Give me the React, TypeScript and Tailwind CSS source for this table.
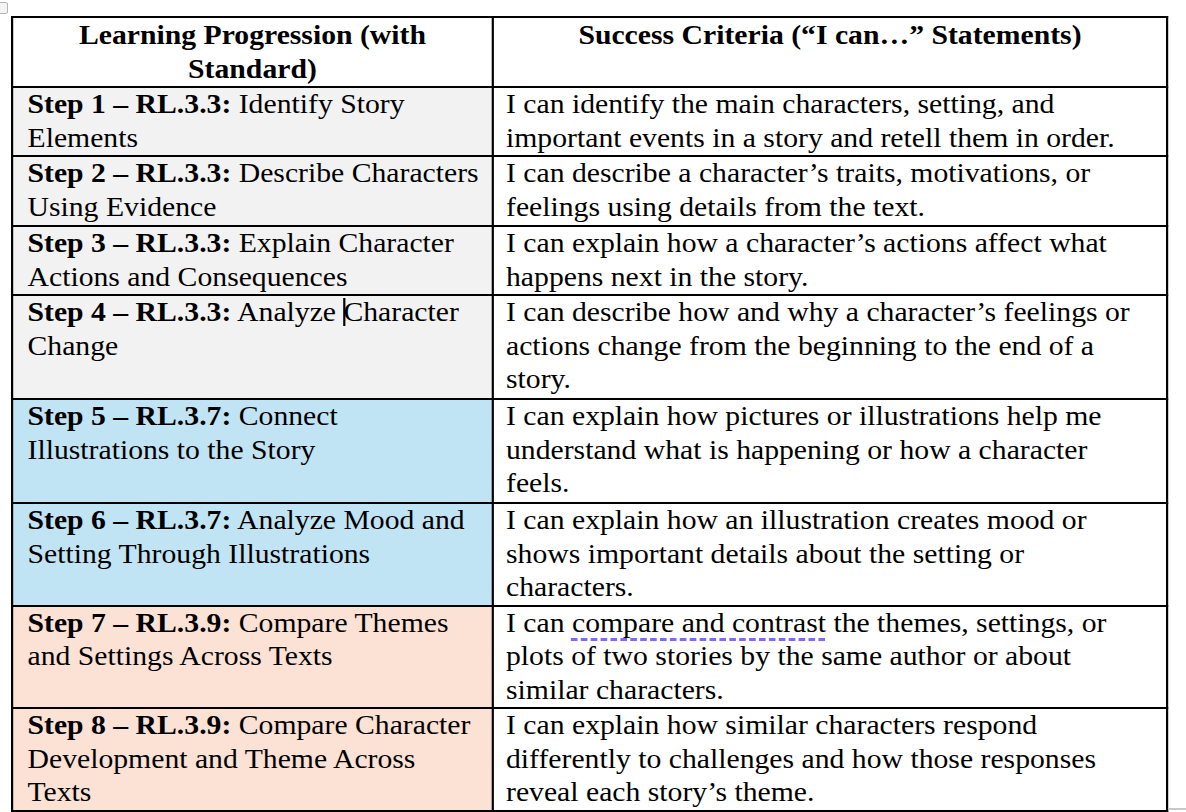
import React from 'react';

type Row = {
  step: string;
  code: string;
  title: React.ReactNode;
  criteria: React.ReactNode;
  bg: string;
  h: string;
};

const rows: Row[] = [
  {
    step: 'Step 1',
    code: 'RL.3.3:',
    title: 'Identify Story Elements',
    criteria: 'I can identify the main characters, setting, and important events in a story and retell them in order.',
    bg: 'bg-[#f2f2f2]',
    h: 'h-[69px]',
  },
  {
    step: 'Step 2',
    code: 'RL.3.3:',
    title: 'Describe Characters Using Evidence',
    criteria: 'I can describe a character’s traits, motivations, or feelings using details from the text.',
    bg: 'bg-[#f2f2f2]',
    h: 'h-[70px]',
  },
  {
    step: 'Step 3',
    code: 'RL.3.3:',
    title: 'Explain Character Actions and Consequences',
    criteria: 'I can explain how a character’s actions affect what happens next in the story.',
    bg: 'bg-[#f2f2f2]',
    h: 'h-[69px]',
  },
  {
    step: 'Step 4',
    code: 'RL.3.3:',
    title: (
      <>
        Analyze <span className="inline-block w-[2px] h-[28px] bg-black align-[-5px] -mr-[2px]" />Character Change
      </>
    ),
    criteria: 'I can describe how and why a character’s feelings or actions change from the beginning to the end of a story.',
    bg: 'bg-[#f2f2f2]',
    h: 'h-[104px]',
  },
  {
    step: 'Step 5',
    code: 'RL.3.7:',
    title: 'Connect Illustrations to the Story',
    criteria: 'I can explain how pictures or illustrations help me understand what is happening or how a character feels.',
    bg: 'bg-[#c1e4f5]',
    h: 'h-[104px]',
  },
  {
    step: 'Step 6',
    code: 'RL.3.7:',
    title: 'Analyze Mood and Setting Through Illustrations',
    criteria: 'I can explain how an illustration creates mood or shows important details about the setting or characters.',
    bg: 'bg-[#c1e4f5]',
    h: 'h-[102px]',
  },
  {
    step: 'Step 7',
    code: 'RL.3.9:',
    title: 'Compare Themes and Settings Across Texts',
    criteria: (
      <>
        I can{' '}
        <span className="underline decoration-dashed decoration-[#7b6cf2] decoration-[3px] underline-offset-[6px]">
          compare and contrast
        </span>{' '}
        the themes, settings, or plots of two stories by the same author or about similar characters.
      </>
    ),
    bg: 'bg-[#fbe2d5]',
    h: 'h-[100px]',
  },
  {
    step: 'Step 8',
    code: 'RL.3.9:',
    title: 'Compare Character Development and Theme Across Texts',
    criteria: 'I can explain how similar characters respond differently to challenges and how those responses reveal each story’s theme.',
    bg: 'bg-[#fbe2d5]',
    h: 'h-[102px]',
  },
];

export default function App() {
  return (
    <div
      className="relative w-[1186px] h-[812px] overflow-hidden bg-white pt-[16px] pl-[11px] text-black text-[27px] leading-[33.5px]"
      style={{ fontFamily: '"Liberation Serif", "Times New Roman", serif' }}
    >
      {/* table move handle */}
      <div className="absolute left-[-3px] top-[2px] w-[11px] h-[12px] border border-[#b5b5b5] bg-[#f4f4f4] rounded-[2px]" />

      {/* the screenshot is stretched sideways, so the table is widened to match */}
      <div className="w-[1050px] origin-top-left scale-x-[1.1]">
        <table className="table-fixed border-collapse border-2 border-black w-[1050px]">
          <colgroup>
            <col className="w-[437px]" />
            <col className="w-[613px]" />
          </colgroup>
          <thead>
            <tr className="h-[70px]">
              <th className="border-2 border-black align-top font-bold text-center px-[12px] pt-[1px]">
                Learning Progression (with Standard)
              </th>
              <th className="border-2 border-black align-top font-bold text-center px-[12px] pt-[1px]">
                Success Criteria (“I can…” Statements)
              </th>
            </tr>
          </thead>
          <tbody>
            {rows.map((r) => (
              <tr key={r.step} className={r.h}>
                <td className={`border-2 border-black align-top pl-[13px] pr-[8px] p-0 ${r.bg}`}>
                  <b>
                    {r.step} – {r.code}
                  </b>{' '}
                  {r.title}
                </td>
                <td className="border-2 border-black align-top pl-[11px] pr-[10px]">{r.criteria}</td>
              </tr>
            ))}
          </tbody>
        </table>
      </div>

      <div className="absolute left-[1168px] top-[808px] w-[18px] h-[2px] bg-[#c8c8c8]" />
    </div>
  );
}
